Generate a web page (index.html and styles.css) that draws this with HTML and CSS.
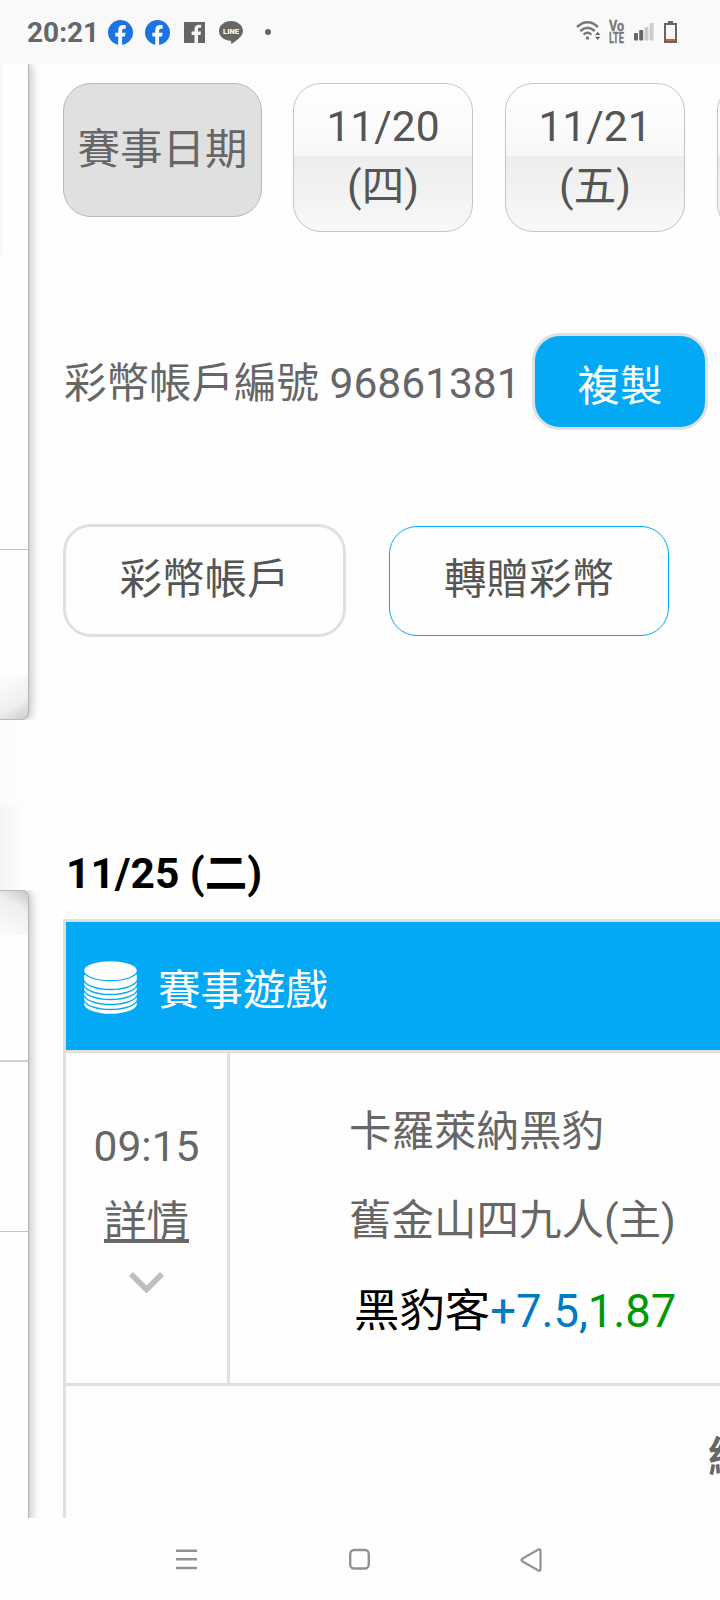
FILE: index.html
```html
<!DOCTYPE html>
<html lang="zh-Hant">
<head>
<meta charset="utf-8">
<title>賽事遊戲</title>
<link rel="stylesheet" href="styles.css">
</head>
<body>
<header class="status">
  <span class="clock">20:21</span>
  <svg class="fb" viewBox="0 0 25 25"><circle cx="12.5" cy="12.5" r="12.5" fill="#1b74e4"/><path d="M10.2 25v-8.4H7.3v-3.9h2.9v-2.4c0-3.6 1.9-5.3 5-5.3.9 0 1.800.1 2.500.25v3.500h-1.700c-1.400 0-1.900.7-1.900 2v1.950h3.500l-.6 3.900h-2.900V25z" fill="#f9f9f9"/></svg>
  <svg class="fb" viewBox="0 0 25 25"><circle cx="12.5" cy="12.5" r="12.5" fill="#1b74e4"/><path d="M10.2 25v-8.4H7.3v-3.9h2.9v-2.4c0-3.6 1.9-5.3 5-5.3.9 0 1.800.1 2.500.25v3.500h-1.700c-1.400 0-1.900.7-1.900 2v1.950h3.500l-.6 3.900h-2.900V25z" fill="#f9f9f9"/></svg>
  <svg class="fbsq" viewBox="0 0 21 21"><path d="M0 0h21v21H0z" fill="#666"/><path d="M10.500 21v-8H7.600V9.500h2.900V7.200c0-3 1.700-4.500 4.400-4.500.9 0 1.600.05 2.100.15v3h-1.500c-1.200 0-1.500.6-1.500 1.600v2.050h2.900l-.4 3.500H14V21z" fill="#f9f9f9"/></svg>
  <svg class="line" viewBox="0 0 24 23"><path d="M12 0c6.600 0 12 4.400 12 9.900 0 4.600-5.400 9.300-12 13.100.3-1.600.5-2.800-.6-3.200C5 19.200 0 15.200 0 9.900 0 4.400 5.400 0 12 0z" fill="#666"/><text x="12" y="13" text-anchor="middle" class="line-word">LINE</text></svg>
  <i class="dot"></i>
  <svg class="wifi" viewBox="0 0 25 19"><g fill="none" stroke="#777" stroke-width="2.400"><path d="M1 6Q11.500-3.500 22 6"/><path d="M4.300 10Q11.500 3.500 18.700 10"/><path d="M7.600 13.600Q11.500 10 15.400 13.600"/></g><circle cx="11.500" cy="17" r="1.700" fill="#777"/><path d="M19 14l2.700-3.200 2.700 3.200zM19 15.800l2.700 3.200 2.700-3.200z" fill="#666"/></svg>
  <svg class="volte" viewBox="0 0 17 22"><text transform="translate(0 10) scale(.9 1)">Vo</text><text transform="translate(0 21.500) scale(.66 1)">LTE</text></svg>
  <svg class="signal" viewBox="0 0 20 18"><g fill="#666"><rect y="10" width="4" height="7.500" rx="1"/><rect x="5.200" y="7" width="4" height="10.500" rx="1"/></g><g fill="#ccc"><rect x="10.400" y="4" width="4" height="13.500" rx="1"/><rect x="15.600" width="4" height="17.500" rx="1"/></g></svg>
  <svg class="battery" viewBox="0 0 13 22"><path d="M4 0h5v2H4z" fill="#666"/><path d="M1 3h11v18H1z" fill="none" stroke="#666" stroke-width="2"/><path d="M2 18h9v2H2z" fill="#e2592a"/></svg>
</header>

<div class="screen">
  <aside class="side">
    <div class="panel panel-top"></div>
    <div class="gap"><div class="gap-upper"></div><div class="gap-lower"></div></div>
    <div class="panel panel-bottom"><div class="cell"></div><div class="cell second"></div></div>
  </aside>
  <main class="main">
    <div class="dates">
      <div class="date-label">賽事日期</div>
      <div class="date">11/20<br>(四)</div>
      <div class="date">11/21<br>(五)</div>
      <div class="date"></div>
    </div>
    <div class="account">
      <span>彩幣帳戶編號 96861381</span>
      <button class="copy">複製</button>
    </div>
    <div class="actions">
      <button class="action">彩幣帳戶</button>
      <button class="action gift">轉贈彩幣</button>
    </div>
    <h2 class="day">11/25 (二)</h2>
    <section class="table">
      <div class="title">
        <svg class="coins" viewBox="0 0 53 53"><g fill="#fff" stroke="#03a9f5" stroke-width="1.300"><path d="M-.5 38v5c0 5.500 12 10.500 27 10.500s27-5 27-10.500v-5z"/><path d="M-.5 33v5c0 5.500 12 10.500 27 10.500s27-5 27-10.500v-5z"/><path d="M-.5 28v5c0 5.500 12 10.500 27 10.500s27-5 27-10.500v-5z"/><path d="M-.5 23v5c0 5.500 12 10.500 27 10.500s27-5 27-10.500v-5z"/><path d="M-.5 18v5c0 5.500 12 10.500 27 10.500s27-5 27-10.500v-5z"/><path d="M-.5 13v5c0 5.500 12 10.500 27 10.500s27-5 27-10.500v-5z"/><ellipse cx="26.500" cy="9.600" rx="27" ry="10.100"/></g></svg>
        <span>賽事遊戲</span>
      </div>
      <div class="game">
        <div class="time">
          <span>09:15</span>
          <a class="detail">詳情</a>
          <svg class="chevron" viewBox="0 0 35 21"><path d="M2 2l15.500 15.500L33 2" fill="none" stroke="#bdbdbd" stroke-width="5.600"/></svg>
        </div>
        <div class="teams">
          <div>卡羅萊納黑豹</div>
          <div>舊金山四九人(主)</div>
          <div class="pick">黑豹客<span class="spread">+7.5,</span><span class="odds">1.87</span></div>
        </div>
      </div>
      <div class="summary">總</div>
    </section>
  </main>
</div>

<nav class="nav">
  <svg class="menu" viewBox="0 0 21 22"><path d="M0 2.700h21M0 11.300h21M0 20h21" stroke="#929292" stroke-width="2.400"/></svg>
  <svg class="home" viewBox="0 0 21 22"><rect x="1.200" y="2" width="18.600" height="18.500" rx="4" fill="none" stroke="#929292" stroke-width="2.400"/></svg>
  <svg class="back" viewBox="0 0 22 24"><path d="M2.200 10.800L18.300 1.600Q20.500.8 20.500 3v18q0 2.200-2.200 1.400L2.200 13.200q-1.700-1.200 0-2.400z" fill="none" stroke="#929292" stroke-width="2.200"/></svg>
</nav>
</body>
</html>
```

FILE: styles.css
```css
* { box-sizing: border-box; }

body {
  margin: 0;
  width: 720px;
  height: 1600px;
  overflow: hidden;
  background: #fefefe;
  font-family: Roboto, "Noto Sans CJK TC", sans-serif;
  font-size: 42.5px;
  color: #666;
}

svg { display: block; flex: none; }

/* Status bar */
.status {
  display: flex;
  align-items: flex-start;
  height: 64px;
  padding-left: 27px;
  background: #f9f9f9;
}
.clock { width: 81px; margin-top: 17px; font-size: 28px; font-weight: 700; line-height: 32px; }
.fb { width: 25px; height: 25px; margin: 20px 12px 0 0; }
.fbsq { width: 21px; height: 21px; margin: 22px 14px 0 2px; }
.line { width: 24px; height: 23px; margin-top: 21px; }
.line-word { font: 900 7.500px Roboto, sans-serif; fill: #f9f9f9; }
.dot { width: 6px; height: 6px; margin: 29px 0 0 22px; border-radius: 50%; background: #666; }
.wifi { width: 25px; height: 19px; margin: 21px 8px 0 305px; }
.volte { width: 17px; height: 22px; margin-top: 21px; overflow: visible; font-size: 14px; font-weight: 700; fill: #777; stroke: #777; stroke-width: .3; }
.signal { width: 20px; height: 18px; margin: 23px 9px 0 8px; }
.battery { width: 13px; height: 22px; margin: 21px 0 0 .5px; }

.screen { display: flex; height: 1453.500px; overflow: hidden; }

/* Strip of the neighbouring column */
.side { flex: none; width: 63px; }
.panel {
  width: 29px;
  border-right: 1px solid #b4b4b4;
  box-shadow: 3px 0 9px rgba(0, 0, 0, .22);
  clip-path: inset(0 -14px 0 0);
}
.panel-top {
  height: 656px;
  border-bottom: 1px solid #b9b9b9;
  border-bottom-right-radius: 7px;
  background:
    linear-gradient(#c4c4c4, #c4c4c4) 0 485px / 100% 1px no-repeat,
    linear-gradient(90deg, #f6f6f6, #fefefe) 0 0 / 4px 191px no-repeat,
    linear-gradient(150deg, #fafafa 15%, #eee 65%, #c8c8c8) 0 612px / 100% 44px no-repeat,
    #fefefe;
}
.gap { height: 170px; padding-top: 1px; }
.gap-upper { width: 28px; height: 84px; background: linear-gradient(90deg, #fbfbfb, #fefefe); }
.gap-lower { width: 28px; height: 85px; background: linear-gradient(90deg, #f5f5f5, #fefefe); }
.panel-bottom {
  height: 640px;
  border-top: 1px solid #b9b9b9;
  border-top-right-radius: 7px;
  background: linear-gradient(30deg, #f9f9f9 15%, #eee 65%, #c8c8c8) 0 0 / 100% 44px no-repeat, #fefefe;
}
.cell { height: 171px; border-bottom: 2px solid #d2d2d2; }
.cell.second { height: 170px; border-bottom: 1px solid #c4c4c4; }

/* Page content */
.main { flex: none; width: 900px; white-space: nowrap; }

.dates { display: flex; align-items: flex-start; gap: 32px; padding-top: 19px; color: #555; text-align: center; }
.date-label {
  width: 199px;
  height: 134px;
  margin-right: -1px;
  border: 1px solid #b9b9b9;
  border-radius: 28px;
  background: #e0e0e0;
  color: #666;
  line-height: 132px;
}
.date {
  width: 180px;
  height: 149px;
  padding-top: 13px;
  border: 1px solid #c4c4c4;
  border-radius: 28px;
  background: linear-gradient(#fff, #f8f8f8 49%, #ededed 49%, #f8f8f8);
  line-height: 59.500px;
}

.account { display: flex; align-items: center; height: 97px; margin-top: 101px; }
.account span { width: 469px; line-height: 60px; padding: 5px 0 0 1px; }
button { padding: 0; font: inherit; background: none; }
.copy {
  width: 176px;
  height: 97px;
  padding-top: 1px;
  border: 3px solid #e0e0e0;
  border-radius: 28px;
  background: #03a9f5;
  color: #fff;
}

.actions { display: flex; align-items: center; gap: 43px; margin-top: 94px; }
.action {
  width: 283px;
  height: 113px;
  padding-bottom: 10px;
  border: 3px solid #e0e0e0;
  border-radius: 28px;
  color: #555;
}
.gift { width: 280px; height: 110px; border: 1px solid #03a9f5; }

.day { margin: 207px 0 0 3px; font-size: 42.500px; line-height: 60px; color: #000; }

.table { margin-top: 15px; border: 3px solid #e0e0e0; }
.title {
  display: flex;
  align-items: center;
  gap: 21px;
  height: 128px;
  padding-left: 18px;
  background: #03a9f5;
  color: #fff;
}
.coins { width: 53px; height: 53px; margin-top: 3px; }
.title span { line-height: 60px; padding-top: 9px; }
.game { display: flex; height: 336px; border: solid #e0e0e0; border-width: 3px 0; }
.time {
  display: flex;
  flex-direction: column;
  align-items: center;
  width: 164px;
  padding-top: 56px;
  border-right: 3px solid #e0e0e0;
  line-height: 75px;
}
.detail { text-decoration: underline; text-decoration-thickness: 4px; text-underline-offset: 3px; text-decoration-skip-ink: none; }
.chevron { width: 35px; height: 21px; margin-top: 13px; }
.teams { padding: 34px 0 0 119px; line-height: 89px; }
.pick { padding: 1.500px 0 0 5px; font-size: 45.400px; color: #000; }
.spread { color: #0279c4; }
.odds { color: #090; }
.summary { height: 400px; padding: 42px 0 0 642px; font-weight: 700; line-height: 60px; }

/* System navigation */
.nav { display: flex; height: 82px; padding: 30px 0 0 176px; background: #fefefe; }
.menu, .home { width: 21px; height: 22px; }
.home { margin-left: 152px; }
.back { width: 22px; height: 24px; margin-left: 150px; }
```
